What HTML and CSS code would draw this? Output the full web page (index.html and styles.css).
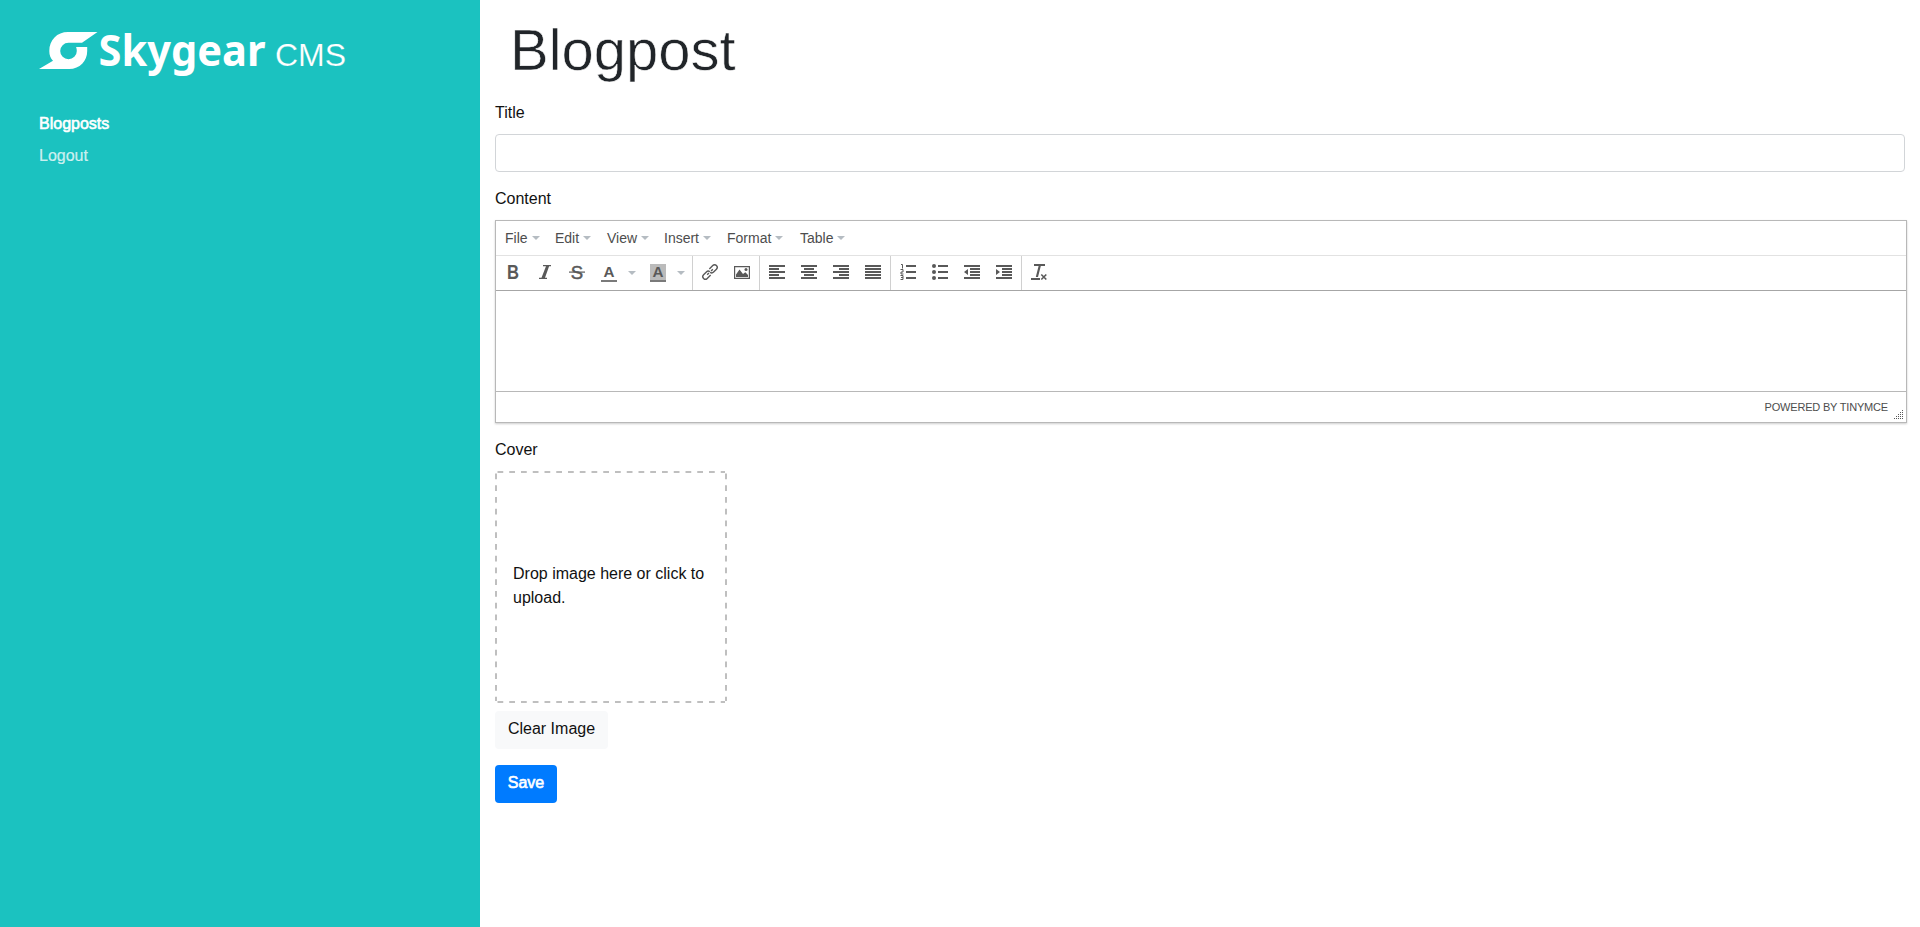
FILE: index.html
```html
<!DOCTYPE html>
<html lang="en">
<head>
<meta charset="utf-8">
<title>Skygear CMS</title>
<link rel="stylesheet" href="styles.css">
</head>
<body>
<div class="app">
  <aside class="sidebar">
    <div class="brand">
      <svg class="logo" width="228" height="46" viewBox="39 31 228 46">
        <path fill="#fff" d="M97.5 32H68C57 32 49.3 40 49.3 51C49.3 55 50.5 58.5 53 60.8L39 69H69C80 69 87.2 61 87.2 51V47H76.1C76.6 48.3 76.8 49.5 76.8 51A8.3 8.3 0 1 1 68.5 42.7H82Z"/>
        <text class="wordmark" x="98.5" y="65.5" textLength="167" lengthAdjust="spacingAndGlyphs">Skygear</text>
      </svg>
      <span class="product">CMS</span>
    </div>
    <nav class="nav">
      <a class="nav-link active">Blogposts</a>
      <a class="nav-link">Logout</a>
    </nav>
  </aside>
  <main class="main">
    <h1 class="heading">Blogpost</h1>
    <div class="group">
      <label class="label">Title</label>
      <input class="input" type="text">
    </div>
    <div class="group">
      <label class="label">Content</label>
      <div class="editor">
        <div class="menubar">
          <span class="menu menu-file">File<i class="caret"></i></span>
          <span class="menu menu-edit">Edit<i class="caret"></i></span>
          <span class="menu menu-view">View<i class="caret"></i></span>
          <span class="menu menu-insert">Insert<i class="caret"></i></span>
          <span class="menu menu-format">Format<i class="caret"></i></span>
          <span class="menu">Table<i class="caret"></i></span>
        </div>
        <div class="toolbar">
          <div class="tools">
            <span class="tool"><svg class="icon" viewBox="0 0 16 16"><text class="glyph" x="2" y="15" font-size="20" textLength="12" lengthAdjust="spacingAndGlyphs">B</text></svg></span>
            <span class="tool"><svg class="icon" viewBox="0 0 16 16"><path d="M6 1h8v1.300h-1.900L8 13.700H10V15H2v-1.300h2.500L9 2.300H6z"/></svg></span>
            <span class="tool"><svg class="icon" viewBox="0 0 16 16"><text class="glyph thin" x="1.800" y="14.700" font-size="19" textLength="12.400" lengthAdjust="spacingAndGlyphs">S</text><path d="M0 7.500h16v1.200H0z"/></svg></span>
            <span class="tool"><svg class="icon tall" viewBox="0 0 16 18"><text class="glyph" x="2.500" y="13" font-size="15" textLength="11" lengthAdjust="spacingAndGlyphs">A</text><path fill-opacity=".8" d="M0 16h16v2H0z"/></svg></span>
            <span class="drop"><i class="caret"></i></span>
            <span class="tool"><svg class="icon tall" viewBox="0 0 16 18"><path fill="#bbb" d="M0 0h16v16H0z"/><text class="glyph" x="2.500" y="13" font-size="15" textLength="11" lengthAdjust="spacingAndGlyphs">A</text><path fill-opacity=".8" d="M0 16h16v2H0z"/></svg></span>
            <span class="drop"><i class="caret"></i></span>
          </div>
          <div class="tools">
            <span class="tool"><svg class="icon line" viewBox="0 0 16 16"><g transform="rotate(-45 8 8)"><path d="M6.300 10.600H1.500a2.600 2.600 0 0 1 0-5.200h4a2.600 2.600 0 0 1 2.600 2.300"/><path d="M9.700 5.400H14.500a2.600 2.600 0 0 1 0 5.200h-4a2.600 2.600 0 0 1-2.600-2.300"/><path d="M4 8h2.500M9.500 8H12"/></g></svg></span>
            <span class="tool"><svg class="icon" viewBox="0 0 16 16"><path fill-rule="evenodd" d="M0 2h16v13H0zM1.200 3.200v10.600h13.600V3.200z"/><path d="M2 13V10.500L5.500 5.500 9 10l2.300-1.700L14 11v2z"/><circle cx="12" cy="5.500" r="1.500"/></svg></span>
          </div>
          <div class="tools">
            <span class="tool"><svg class="icon" viewBox="0 0 16 16"><path d="M0 1h16v2H0zM0 4h10v2H0zM0 7h16v2H0zM0 10h10v2H0zM0 13h16v2H0z"/></svg></span>
            <span class="tool"><svg class="icon" viewBox="0 0 16 16"><path d="M0 1h16v2H0zM3 4h10v2H3zM0 7h16v2H0zM3 10h10v2H3zM0 13h16v2H0z"/></svg></span>
            <span class="tool"><svg class="icon" viewBox="0 0 16 16"><path d="M0 1h16v2H0zM6 4h10v2H6zM0 7h16v2H0zM6 10h10v2H6zM0 13h16v2H0z"/></svg></span>
            <span class="tool"><svg class="icon" viewBox="0 0 16 16"><path d="M0 1h16v2H0zM0 4h16v2H0zM0 7h16v2H0zM0 10h16v2H0zM0 13h16v2H0z"/></svg></span>
          </div>
          <div class="tools">
            <span class="tool"><svg class="icon" viewBox="0 0 16 16"><path d="M6 1h10v2H6zM6 7h10v2H6zM6 13h10v2H6z"/><path fill="none" stroke="#595959" d="M1 .5h1.500V4.500M.5 5.500h2.500v2.500H1v2h2.500M.5 11.500h2.500v4H.5M1 13.500h2"/></svg></span>
            <span class="tool"><svg class="icon" viewBox="0 0 16 16"><path d="M6 1h10v2H6zM6 7h10v2H6zM6 13h10v2H6z"/><circle cx="2" cy="2" r="2"/><circle cx="2" cy="8" r="2"/><circle cx="2" cy="14" r="2"/></svg></span>
            <span class="tool"><svg class="icon" viewBox="0 0 16 16"><path d="M0 1h16v2H0zM6 4h10v2H6zM6 7h10v2H6zM6 10h10v2H6zM0 13h16v2H0zM4 5v6L0 8z"/></svg></span>
            <span class="tool"><svg class="icon" viewBox="0 0 16 16"><path d="M0 1h16v2H0zM6 4h10v2H6zM6 7h10v2H6zM6 10h10v2H6zM0 13h16v2H0zM0 5v6l4-3z"/></svg></span>
          </div>
          <div class="tools">
            <span class="tool"><svg class="icon" viewBox="0 0 16 16"><path d="M3 0h11v2H9.800L7 13H4.800L7.600 2H3zM0 14h9v2H0z"/><path fill="none" stroke="#595959" stroke-width="1.600" d="M10.300 10.500l5 5M15.300 10.500l-5 5"/></svg></span>
          </div>
        </div>
        <div class="canvas"></div>
        <div class="status">
          <span class="powered">POWERED BY TINYMCE</span>
          <svg class="grip" width="10" height="10" viewBox="0 0 10 10"><path d="M9 0h1v1H9zM7 2h1v1H7zM9 2h1v1H9zM5 4h1v1H5zM7 4h1v1H7zM9 4h1v1H9zM3 6h1v1H3zM5 6h1v1H5zM7 6h1v1H7zM9 6h1v1H9zM1 8h1v1H1zM3 8h1v1H3zM5 8h1v1H5zM7 8h1v1H7zM9 8h1v1H9z"/></svg>
        </div>
      </div>
    </div>
    <div class="group cover">
      <label class="label">Cover</label>
      <div class="dropzone">
        <svg class="dashes" width="232" height="232"><path d="M2.500 1H230M2.500 231H230M1 2.500V230M231 2.500V230"/></svg>
        Drop image here or click to upload.
      </div>
      <button class="btn btn-light">Clear Image</button>
    </div>
    <button class="btn btn-primary">Save</button>
  </main>
</div>
</body>
</html>
```
FILE: styles.css
```css
* { box-sizing: border-box; }
body {
  margin: 0;
  font: 16px/24px "Liberation Sans", Arial, sans-serif;
  color: #212529;
  background: #fff;
}
.app { display: flex; height: 927px; }
.sidebar {
  width: 480px;
  flex: none;
  background: #1bc2c0;
  padding: 31px 39px;
  color: #fff;
}
.brand { display: flex; height: 46px; }
.logo { display: block; flex: none; overflow: visible; }
.wordmark { font: bold 43px "Noto Sans", sans-serif; fill: #fff; }
.product {
  margin-left: 8px;
  font-size: 32px;
  line-height: 48px;
  -webkit-text-stroke: .2px #1bc2c0;
}
.nav { display: flex; flex-direction: column; gap: 8px; padding-top: 35px; }
.nav-link { color: rgba(255, 255, 255, .75); height: 24px; -webkit-text-stroke: .2px; }
.nav-link.active { color: #fff; -webkit-text-stroke: .6px #fff; }

.main { flex: 1; padding: 16px 15px 0; min-width: 0; }
.heading {
  margin: 0 0 17px;
  padding-left: 15px;
  font-size: 58px;
  line-height: 68px;
  font-weight: 400;
  -webkit-text-stroke: .6px #fff;
}
.group { margin-bottom: 15px; }
.group.cover { margin-bottom: 16px; }
.label { display: block; margin-bottom: 9px; color: #111; }
.input {
  display: block;
  width: 100%;
  height: 38px;
  border: 1px solid #d2d5d8;
  border-radius: 4px;
  padding: 6px 12px;
  font: inherit;
}
.editor {
  width: calc(100% + 2px);
  border: 1px solid #b8b8b8;
  box-shadow: 0 1px 2px rgba(0, 0, 0, .2);
  color: #595959;
}
.menubar {
  display: flex;
  height: 35px;
  border-bottom: 1px solid #e2e2e2;
  padding-left: 9px;
  font-size: 14px;
  line-height: 34px;
}
.menu { display: flex; align-items: center; color: #4d4d4d; }
.menu-file { width: 50px; }
.menu-edit { width: 52px; }
.menu-view { width: 57px; }
.menu-insert { width: 63px; }
.menu-format { width: 73px; }
.caret {
  margin-left: 4px;
  border: 4px solid transparent;
  border-top-color: #b5bcc2;
  border-bottom: 0;
}
.toolbar { display: flex; height: 35px; border-bottom: 1px solid #a6a6a6; }
.tools { display: flex; padding: 0 1px; border-right: 1px solid #d0d0d0; }
.tools:last-child { border-right: 0; }
.tool { width: 32px; padding: 8px 8px 0; }
.drop { width: 17px; padding: 15px 0 0 0; }
.drop .caret { display: block; width: 8px; margin-left: 3px; }
.icon { display: block; width: 16px; height: 16px; fill: #595959; overflow: visible; }
.icon.tall { height: 18px; }
.icon.line { fill: none; stroke: #595959; stroke-width: 1.4; }
.glyph { font-family: "Liberation Sans", Arial, sans-serif; font-weight: bold; }
.glyph.thin { font-weight: 400; stroke: #595959; stroke-width: .5px; }
.canvas { height: 100px; }
.status {
  display: flex;
  justify-content: flex-end;
  height: 31px;
  border-top: 1px solid #b8b8b8;
  padding-right: 3px;
}
.powered { margin-right: 5px; font-size: 11px; line-height: 30px; letter-spacing: -.18px; color: #4d4d4d; }
.grip { margin-top: 18px; fill: #595959; }
.dropzone {
  position: relative;
  display: flex;
  align-items: center;
  width: 232px;
  height: 232px;
  margin-bottom: 8px;
  padding: 0 18px 2px;
  color: #111;
}
.dashes {
  position: absolute;
  inset: 0;
  fill: none;
  stroke: #bfbfbf;
  stroke-width: 2;
  stroke-dasharray: 5.75 6;
}
.btn {
  display: block;
  height: 38px;
  border: 0;
  border-radius: 4px;
  padding: 0 0 3px;
  font: inherit;
  text-align: center;
}
.btn-light { width: 113px; background: #f8f9fa; color: #111; }
.btn-primary { width: 62px; background: #007bff; color: #fff; -webkit-text-stroke: .6px #fff; }
```
